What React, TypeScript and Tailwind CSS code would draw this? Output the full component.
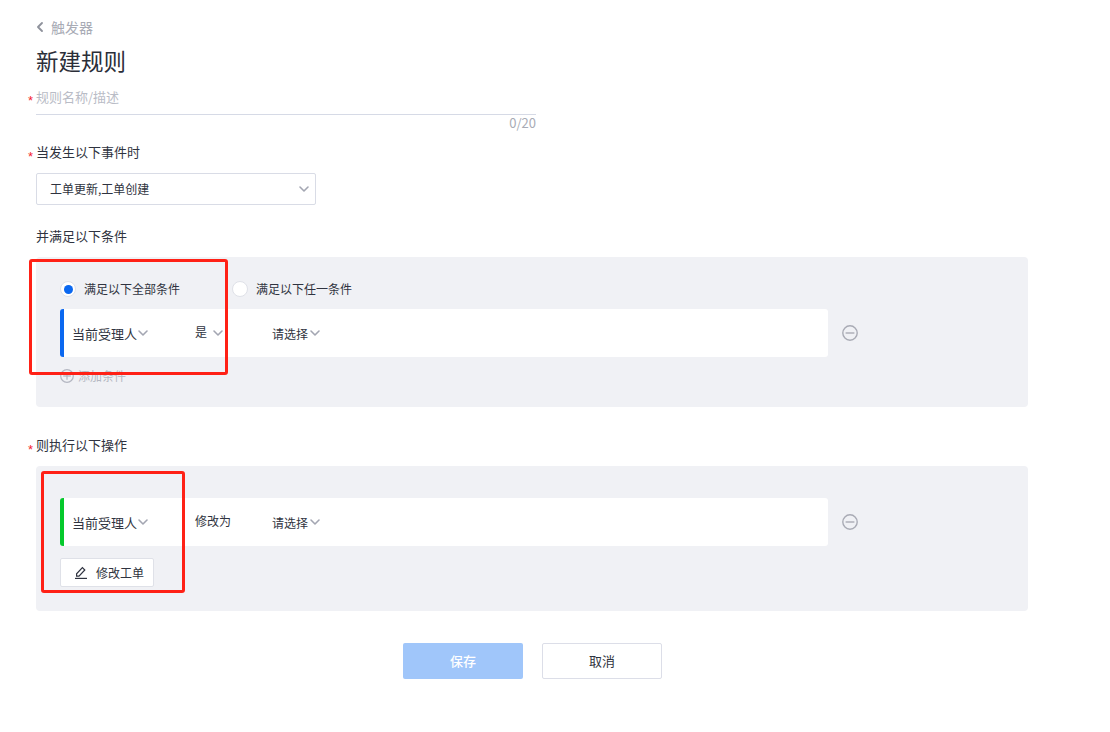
import { ChevronDown, ChevronLeft } from "lucide-react";

const font = "font-['Noto_Sans_CJK_SC','Liberation_Sans',sans-serif]";

function Caret({ className = "" }: { className?: string }) {
  return <ChevronDown className={`h-4 w-4 text-[#a3a6b2] ${className}`} strokeWidth={2.4} />;
}

function Star() {
  return (
    <span className="absolute -left-[8px] top-1 font-['Liberation_Sans',sans-serif] text-[13px] leading-5 text-[#f5222d]">*</span>
  );
}

function CircleIcon({ plus, className = "" }: { plus?: boolean; className?: string }) {
  return (
    <svg viewBox="0 0 16 16" fill="none" stroke="currentColor" strokeWidth="1.4" className={className}>
      <circle cx="8" cy="8" r="7.2" />
      <path d="M3.6 8h8.8" />
      {plus && <path d="M8 3.6v8.8" />}
    </svg>
  );
}

function Label({ text, required }: { text: string; required?: boolean }) {
  return (
    <div className="relative h-5 text-[13px] leading-[18px] text-[#2f3340]">
      {required && <Star />}
      {text}
    </div>
  );
}

function RuleRow({ color, field, op, opCaret }: { color: string; field: string; op: string; opCaret?: boolean }) {
  return (
    <div className="flex items-center">
      <div className={`flex h-12 w-[768px] items-center rounded-[3px] border-l-4 bg-white pl-2 text-[13px] text-[#2f3340] ${color}`}>
        <div className="mt-0.5 flex w-[123px] items-center">
          {field}
          <Caret className="-mt-0.5 -ml-0.5" />
        </div>
        <div className="-mt-0.5 flex w-[77px] items-center gap-[3px] text-xs">
          {op}
          {opCaret && <Caret className="mt-0.5" />}
        </div>
        <div className="mt-0.5 flex items-center text-xs">
          请选择
          <Caret className="-mt-0.5 -ml-px" />
        </div>
      </div>
      <CircleIcon className="ml-[14px] h-4 w-4 text-[#a9abb5]" />
    </div>
  );
}

function Radio({ checked, text }: { checked?: boolean; text: string }) {
  return (
    <div className="flex items-center gap-2 text-xs text-[#2f3340]">
      <span className="flex h-4 w-4 items-center justify-center rounded-full border border-[#dfe1e8] bg-white">
        {checked && <span className="h-[9px] w-[9px] rounded-full bg-[#0b68f0]" />}
      </span>
      {text}
    </div>
  );
}

export default function App() {
  return (
    <div className={`relative h-[732px] w-[1110px] overflow-hidden bg-white pl-9 pt-[17px] ${font}`}>
      <div className="flex h-5 items-center text-sm text-[#a8abb5]">
        <ChevronLeft className="-ml-[4px] mr-[3px] h-4 w-4 text-[#8f929c]" strokeWidth={2.8} />
        触发器
      </div>
      <h1 className="mt-[7px] text-[22.5px] leading-[32px] text-[#2b2e38]">新建规则</h1>

      <div className="mt-[11px] w-[500px]">
        <div className="relative h-7 border-b border-[#d6dae6] text-[13px] leading-[20px] text-[#b9bcc6]">
          <Star />
          规则名称/描述
        </div>
        <div className="text-right text-[13px] leading-4 text-[#a8abb5]">0/20</div>
      </div>

      <div className="mt-3">
        <Label text="当发生以下事件时" required />
      </div>
      <div className="mt-[10px] flex h-8 w-[280px] items-center justify-between rounded-[2px] border border-[#d9dce6] pl-[13px] pr-[3px] text-xs text-[#2f3340]">
        工单更新,工单创建
        <Caret />
      </div>

      <div className="mt-[22px]">
        <Label text="并满足以下条件" />
      </div>
      <div className="relative mt-[10px] h-[150px] w-[992px] rounded bg-[#f0f1f5] px-6 pt-[23px]">
        <div className="flex h-[18px] items-center">
          <div className="w-[172px]">
            <Radio checked text="满足以下全部条件" />
          </div>
          <Radio text="满足以下任一条件" />
        </div>
        <div className="mt-[11px]">
          <RuleRow color="border-[#0b68f0]" field="当前受理人" op="是" opCaret />
        </div>
        <div className="mt-[9px] flex items-center gap-1 text-xs leading-5 text-[#b4b7c2]">
          <CircleIcon plus className="h-[14px] w-[14px] text-[#b4b7c2]" />
          添加条件
        </div>
        <div className="absolute -left-[7px] top-[2px] h-[116px] w-[199px] rounded-[3px] border-[3px] border-[#ff2116]" />
      </div>

      <div className="mt-[29px]">
        <Label text="则执行以下操作" required />
      </div>
      <div className="relative mt-[10px] h-[145px] w-[992px] rounded bg-[#f0f1f5] px-6 pt-8">
        <RuleRow color="border-[#05c92c]" field="当前受理人" op="修改为" />
        <button className="mt-3 flex h-[29px] w-[94px] items-center gap-[9px] rounded-[2px] border border-[#dfe1e8] bg-white pl-[14px] text-xs text-[#2f3340]">
          <svg viewBox="0 0 12 13" fill="none" stroke="currentColor" strokeWidth="1.2" className="h-[13px] w-3">
            <path d="M0 12.4h12" />
            <path d="M1.6 10.2V7.8L7.4 1.6l2.4 2.4-5.8 6.2z" />
          </svg>
          修改工单
        </button>
        <div className="absolute left-[5px] top-[5px] h-[122px] w-[144px] rounded-[3px] border-[3px] border-[#ff2116]" />
      </div>

      <div className="mt-8 flex pl-[367px]">
        <button className="h-9 w-[120px] rounded-[2px] bg-[#a0c6fa] text-[13px] font-medium text-white">保存</button>
        <button className="ml-[19px] h-9 w-[120px] rounded-[2px] border border-[#dcdee8] bg-white text-[13px] text-[#2f3340]">取消</button>
      </div>
    </div>
  );
}
